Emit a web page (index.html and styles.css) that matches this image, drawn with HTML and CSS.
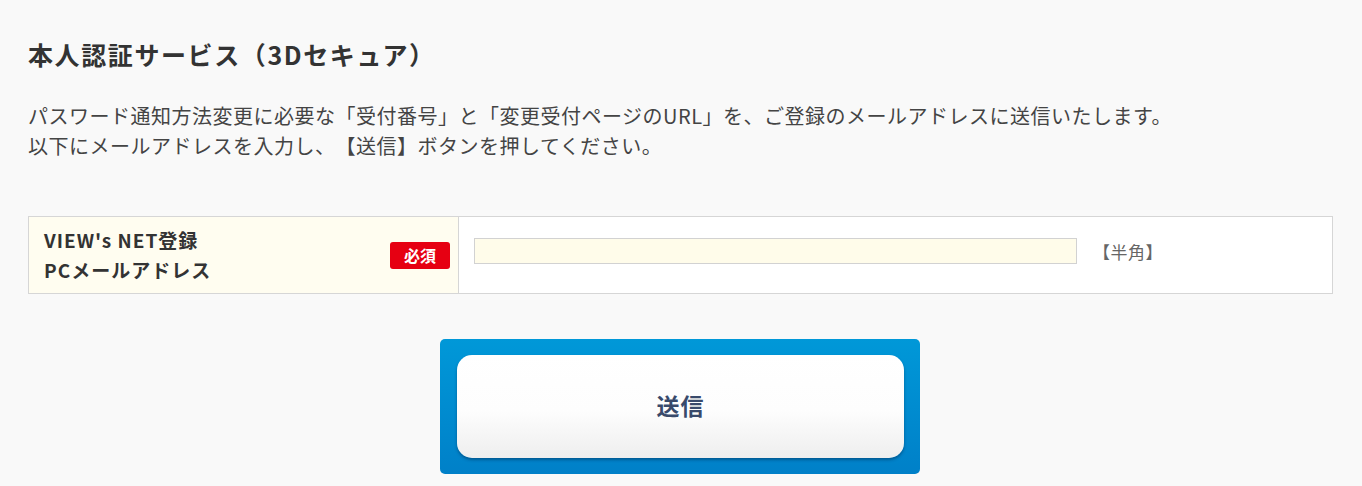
FILE: index.html
```html
<!DOCTYPE html>
<html>
<head lang="ja">
    <meta charset="UTF-8">
    <title>本人認証サービス（3Dセキュア）</title>
    <link rel="stylesheet" href="styles.css">
</head>
<body>
    <div class="page">
        <h1 class="ttl">本人認証サービス（3Dセキュア）</h1>
        <p class="lead">
            パスワード通知方法変更に必要な「受付番号」と「変更受付ページのURL」を、ご登録のメールアドレスに送信いたします。<br>
            以下にメールアドレスを入力し、【送信】ボタンを押してください。
        </p>

        <table class="form-table">
            <tr>
                <th>
                    <div class="th-inner">
                        <span class="label">VIEW's NET登録<br>PCメールアドレス</span>
                        <span class="must">必須</span>
                    </div>
                </th>
                <td>
                    <div class="td-inner">
                        <input type="text" class="mail">
                        <span class="note">【半角】</span>
                    </div>
                </td>
            </tr>
        </table>

        <div class="btn-area">
            <div class="btn-frame">
                <button type="button" class="btn-send">送信</button>
            </div>
        </div>
    </div>
</body>
</html>
```

FILE: styles.css
```css
* {
    margin: 0;
    padding: 0;
    box-sizing: border-box;
}
html, body {
    background: #f9f9f9;
}
body {
    font-family: "Noto Sans CJK JP", "Noto Sans", sans-serif;
    color: #333;
    text-spacing-trim: space-all;
}
.page {
    padding: 36px 28px 0 28px;
    width: 1362px;
}
.ttl {
    font-size: 25px;
    font-weight: bold;
    line-height: 36px;
    letter-spacing: 1.6px;
    color: #333;
}
.lead {
    margin-top: 29px;
    font-size: 20px;
    line-height: 30px;
    letter-spacing: 0.5px;
    color: #444;
}
.form-table {
    margin-top: 55px;
    width: 1305px;
    border-collapse: collapse;
    background: #fff;
}
.form-table th,
.form-table td {
    border: 1px solid #d6d6d6;
    height: 77px;
    vertical-align: middle;
    text-align: left;
}
.form-table th {
    width: 430px;
    background: #fffdf0;
    padding: 0 8px 0 15px;
}
.th-inner {
    display: flex;
    align-items: center;
    justify-content: space-between;
}
.label {
    font-size: 19px;
    font-weight: bold;
    line-height: 30px;
    letter-spacing: 1px;
    color: #333;
}
.must {
    display: inline-block;
    background: #e60012;
    color: #fff;
    font-size: 16px;
    font-weight: bold;
    width: 60px;
    height: 27px;
    line-height: 27px;
    text-align: center;
    border-radius: 3px;
}
.form-table td {
    padding: 0 15px 8px 15px;
}
.td-inner {
    display: flex;
    align-items: center;
    gap: 16px;
}
.mail {
    width: 603px;
    height: 26px;
    background: #fffcea;
    border: 1px solid #d2d2d2;
    outline: none;
}
.note {
    font-size: 17px;
    letter-spacing: 0.5px;
    color: #666;
}
.btn-area {
    display: flex;
    justify-content: center;
    margin-top: 45px;
    padding-right: 2px;
}
.btn-frame {
    width: 480px;
    height: 135px;
    padding: 16px 16px 16px 17px;
    border-radius: 5px;
    background: linear-gradient(#0098d8, #0080c8);
}
.btn-send {
    display: block;
    width: 100%;
    height: 103px;
    padding-bottom: 4px;
    border: none;
    border-radius: 15px;
    background: linear-gradient(#ffffff 0%, #fdfdfd 55%, #eeeeee 100%);
    box-shadow: 0 2px 3px rgba(0, 40, 80, 0.45);
    font-family: "Noto Sans CJK JP", sans-serif;
    font-size: 23px;
    font-weight: bold;
    color: #394a6b;
    letter-spacing: 1px;
    cursor: pointer;
}
```
